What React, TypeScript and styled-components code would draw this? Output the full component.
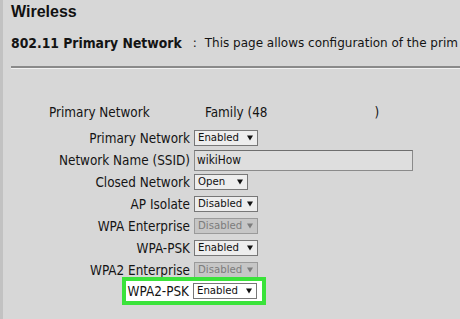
import styled, { createGlobalStyle } from "styled-components";

const GlobalStyle = createGlobalStyle`
  html, body {
    margin: 0;
    padding: 0;
    background: #d7d7d7;
  }
  body {
    font-family: "DejaVu Sans Condensed", "DejaVu Sans", Verdana, sans-serif;
    color: #141414;
  }
`;

const Page = styled.div`
  width: 460px;
  height: 319px;
  box-sizing: border-box;
  overflow: hidden;
  background: #d7d7d7;
  border-left: 3px solid #c2c2c2;
  padding-left: 8px;
`;

const Title = styled.h1`
  margin: 3px 0 0;
  height: 18px;
  line-height: 18px;
  font-family: "Liberation Sans", Arial, sans-serif;
  font-size: 16px;
  font-weight: bold;
  color: #111;
`;

const Description = styled.div`
  margin-top: 14px;
  height: 16px;
  line-height: 16px;
  font-family: "DejaVu Sans", Verdana, sans-serif;
  font-size: 12px;
  white-space: nowrap;
  overflow: hidden;
  display: flex;
`;

const Section = styled.span`
  font-family: "DejaVu Sans Condensed", "DejaVu Sans", sans-serif;
  font-weight: bold;
  font-size: 13.8px;
`;

const Colon = styled.span`
  margin: 0 8px 0 11px;
`;

const Rule = styled.div`
  margin-top: 15px;
  height: 0;
  border-top: 2px solid #8a8a8a;
  border-bottom: 1px solid #f2f2f2;
`;

const InfoRow = styled.div`
  margin-top: 32px;
  height: 22px;
  display: flex;
  align-items: center;
  font-size: 13.4px;
  padding-left: 38px;
  white-space: nowrap;
`;

const InfoLabel = styled.span`
  width: 156px;
`;

const Paren = styled.span`
  margin-left: 107px;
`;

const Form = styled.div`
  margin-top: 4px;
  display: flex;
  flex-direction: column;
`;

const Row = styled.div`
  height: 22px;
  display: grid;
  grid-template-columns: 179px auto;
  column-gap: 4px;
  align-items: center;
  font-size: 13.4px;
`;

const Label = styled.span`
  text-align: right;
  white-space: nowrap;
`;

const HighlightRow = styled.div`
  margin: -4px 0 0 111px;
  width: fit-content;
  height: 20px;
  display: flex;
  align-items: center;
  gap: 4px;
  padding: 0 5px 0 0;
  border: 4px solid #3ae33a;
  background: #ffffff;
  font-size: 13.4px;
`;

const HighlightLabel = styled.span`
  width: 63px;
  text-align: right;
  white-space: nowrap;
`;

const Select = styled.div<{ $w: number; $disabled?: boolean; $white?: boolean }>`
  width: ${(p) => p.$w}px;
  height: 16px;
  box-sizing: border-box;
  display: flex;
  align-items: center;
  justify-content: space-between;
  padding: 0 4px 0 3px;
  border: 1px solid ${(p) => (p.$disabled ? "#9a9a9a" : "#777")};
  background: ${(p) => (p.$disabled ? "#c6c6c6" : p.$white ? "#ffffff" : "#ededed")};
  color: ${(p) => (p.$disabled ? "#7c7c7c" : "#111")};
  font-size: 11.3px;
  line-height: 14px;
`;

const TextInput = styled.div`
  width: 219px;
  height: 21px;
  box-sizing: border-box;
  display: flex;
  align-items: center;
  padding-left: 2px;
  border: 1px solid #8a8a8a;
  border-top-color: #6e6e6e;
  background: #dedede;
  font-size: 11.8px;
  color: #111;
`;

function Arrow({ color }: { color: string }) {
  return (
    <svg width="6" height="6" viewBox="0 0 6 6">
      <polygon points="0,0.5 6,0.5 3,5.5" fill={color} />
    </svg>
  );
}

function Dropdown({
  value,
  width = 64,
  disabled,
  white,
}: {
  value: string;
  width?: number;
  disabled?: boolean;
  white?: boolean;
}) {
  return (
    <Select $w={width} $disabled={disabled} $white={white}>
      <span>{value}</span>
      <Arrow color={disabled ? "#7c7c7c" : "#111"} />
    </Select>
  );
}

const rows: { label: string; value: string; width?: number; disabled?: boolean }[] = [
  { label: "Primary Network", value: "Enabled" },
  { label: "Network Name (SSID)", value: "wikiHow" },
  { label: "Closed Network", value: "Open", width: 54 },
  { label: "AP Isolate", value: "Disabled" },
  { label: "WPA Enterprise", value: "Disabled", disabled: true },
  { label: "WPA-PSK", value: "Enabled" },
  { label: "WPA2 Enterprise", value: "Disabled", disabled: true },
];

export default function App() {
  return (
    <>
      <GlobalStyle />
      <Page>
        <Title>Wireless</Title>
        <Description>
          <Section>802.11 Primary Network</Section>
          <Colon>:</Colon>
          <span>This page allows configuration of the prim</span>
        </Description>
        <Rule />
        <InfoRow>
          <InfoLabel>Primary Network</InfoLabel>
          <span>Family (48</span>
          <Paren>)</Paren>
        </InfoRow>
        <Form>
          {rows.map((r) => (
            <Row key={r.label}>
              <Label>{r.label}</Label>
              {r.label === "Network Name (SSID)" ? (
                <TextInput>{r.value}</TextInput>
              ) : (
                <Dropdown value={r.value} width={r.width} disabled={r.disabled} />
              )}
            </Row>
          ))}
          <HighlightRow>
            <HighlightLabel>WPA2-PSK</HighlightLabel>
            <Dropdown value="Enabled" white />
          </HighlightRow>
        </Form>
      </Page>
    </>
  );
}
